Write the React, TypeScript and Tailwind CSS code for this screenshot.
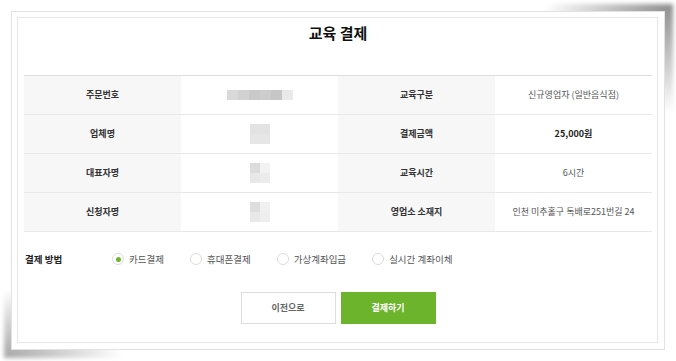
import { useState } from 'react'

const font = { fontFamily: '"Noto Sans CJK KR", "Noto Sans", sans-serif' }

type Row = { label: string; value: React.ReactNode; label2: string; value2: React.ReactNode }

// pixelated "masked" personal data
function Masked({ wide, tones }: { wide?: boolean; tones: string[] }) {
  if (wide) {
    return (
      <div className="flex h-[10px] blur-[0.6px]">
        {tones.map((t, i) => (
          <div key={i} className="h-full w-[11px]" style={{ background: t }} />
        ))}
      </div>
    )
  }
  return (
    <div className="grid grid-cols-2 blur-[0.6px]">
      {tones.map((t, i) => (
        <div key={i} className="h-[10px] w-[10px]" style={{ background: t }} />
      ))}
    </div>
  )
}

const rows: Row[] = [
  {
    label: '주문번호',
    value: <Masked wide tones={['#d9d9d9', '#d2d2d2', '#c9c9c9', '#cdcdcd', '#c6c6c6', '#e9e9e9']} />,
    label2: '교육구분',
    value2: '신규영업자 (일반음식점)',
  },
  {
    label: '업체명',
    value: <Masked tones={['#e3e3e3', '#e3e3e3', '#e6e6e6', '#e6e6e6']} />,
    label2: '결제금액',
    value2: <span className="font-bold text-[#222]">25,000원</span>,
  },
  {
    label: '대표자명',
    value: <Masked tones={['#dcdcdc', '#f2f2f2', '#e8e8e8', '#ececec']} />,
    label2: '교육시간',
    value2: '6시간',
  },
  {
    label: '신청자명',
    value: <Masked tones={['#dddddd', '#f0f0f0', '#e8e8e8', '#eeeeee']} />,
    label2: '영업소 소재지',
    value2: '인천 미추홀구 독배로251번길 24',
  },
]

const methods = ['카드결제', '휴대폰결제', '가상계좌입금', '실시간 계좌이체']

export default function App() {
  const [method, setMethod] = useState(0)

  return (
    <div className="h-[361px] w-[676px] bg-white pl-[11px] pt-[11px]" style={font}>
      <div className="relative h-[339px] w-[654px]">
        {/* lifted-corner shadows */}
        <div className="absolute -right-[8px] -top-[7px] h-[110px] w-[130px] bg-[radial-gradient(ellipse_at_top_right,rgba(0,0,0,0.45),rgba(0,0,0,0)_70%)] blur-[2px]" />
        <div className="absolute -bottom-[8px] -left-[7px] h-[70px] w-[120px] bg-[radial-gradient(ellipse_at_bottom_left,rgba(0,0,0,0.35),rgba(0,0,0,0)_70%)] blur-[2px]" />

        <div className="relative h-full border border-[#e2e2e2] bg-white pb-[6px] pl-[5px] pr-[6px] pt-[5px]">
          <div className="h-full border border-[#e6e6e6] pl-[6px] pr-[5px]">
            <h1 className="mb-[31px] pt-[4px] text-center text-[15px] font-bold leading-[22px] text-[#111]">교육 결제</h1>

            {/* order info */}
            <div className="border-t border-[#dcdcdc]">
              {rows.map((r) => (
                <div key={r.label} className="grid h-[39px] grid-cols-4 border-b border-[#e8e8e8] text-[9px]">
                  <div className="flex items-center justify-center bg-[#f7f7f7] font-bold text-[#333]">{r.label}</div>
                  <div className="flex items-center justify-center">{r.value}</div>
                  <div className="flex items-center justify-center bg-[#f7f7f7] font-bold text-[#333]">{r.label2}</div>
                  <div className="flex items-center justify-center text-[#555]">{r.value2}</div>
                </div>
              ))}
            </div>

            {/* payment method */}
            <div className="mt-[17px] flex h-[20px] items-center pl-px text-[9.5px]">
              <div className="w-[87px] font-bold text-[#222]">결제 방법</div>
              <div className="flex items-center gap-[26px]">
                {methods.map((m, i) => (
                  <label key={m} className="flex cursor-pointer items-center gap-[5px] text-[#555]" onClick={() => setMethod(i)}>
                    <span className="flex h-[12px] w-[12px] items-center justify-center rounded-full border border-[#dcdcdc] bg-white">
                      {method === i && <span className="h-[5px] w-[5px] rounded-full bg-[#6cb42c]" />}
                    </span>
                    {m}
                  </label>
                ))}
              </div>
            </div>

            {/* actions */}
            <div className="mt-[23px] flex justify-center gap-[5px] text-[9px] font-bold">
              <button className="h-[32px] w-[95px] border border-[#dddddd] bg-white text-[#666]">이전으로</button>
              <button className="h-[32px] w-[95px] bg-[#6cb42c] text-white">결제하기</button>
            </div>
          </div>
        </div>
      </div>
    </div>
  )
}
